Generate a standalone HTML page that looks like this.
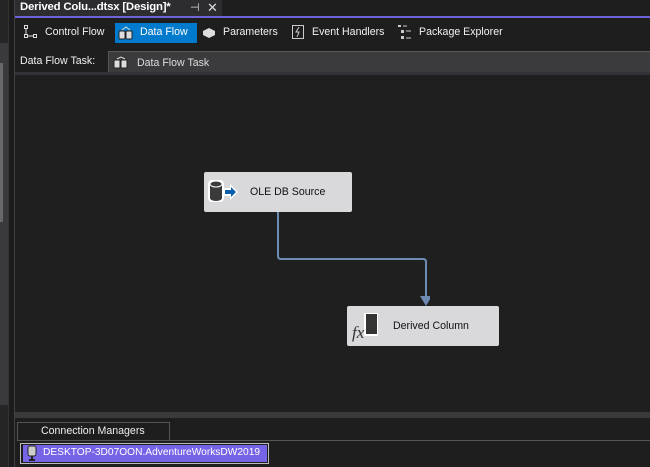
<!DOCTYPE html>
<html><head><style>
*{margin:0;padding:0;box-sizing:border-box}
body{width:650px;height:467px;background:#1e1e1e;font-family:"Liberation Sans",sans-serif;font-size:10.6px;color:#f1f1f1;position:relative;overflow:hidden}
.a{position:absolute;white-space:nowrap}
</style></head><body>
<div class="a" style="left:0;top:0;width:8px;height:467px;background:#252526"></div>
<div class="a" style="left:0;top:43px;width:8px;height:362px;background:#3a3a3d"></div>
<div class="a" style="left:0;top:63px;width:3px;height:159px;background:#686868"></div>
<div class="a" style="left:8px;top:0;width:6px;height:467px;background:#1c1c1c;border-left:1px solid #333"></div>
<div class="a" style="left:14px;top:0;width:1px;height:467px;background:#3f3f46"></div>
<div class="a" style="left:15px;top:0;width:635px;height:16px;background:#1e1e1e"></div>
<div class="a" style="left:15px;top:0;width:207px;height:16px;background:#2d2d30"></div>
<div class="a" style="left:20px;top:1px;font-weight:bold;font-size:11.4px;color:#fff;letter-spacing:-0.2px">Derived Colu...dtsx [Design]*</div>
<div class="a" style="left:190px;top:1px;font-size:11px;color:#ddd">⊣</div>
<div class="a" style="left:207px;top:0px;font-size:13px;color:#ddd">✕</div>
<div class="a" style="left:15px;top:16px;width:635px;height:2px;background:#6e63d8"></div>
<svg class="a" style="left:23px;top:25px" width="16" height="14"><rect x="1.5" y="0.5" width="3" height="3" fill="none" stroke="#ddd"/><rect x="1.5" y="9.5" width="3" height="3" fill="none" stroke="#ddd"/><rect x="10.5" y="9.5" width="3" height="3" fill="none" stroke="#ddd"/><path d="M3 4v5M5 11h5" stroke="#ddd"/></svg>
<div class="a" style="left:45px;top:26px">Control Flow</div>
<div class="a" style="left:115px;top:23px;width:82px;height:20px;background:#007acc"></div>
<svg class="a" style="left:118px;top:25px" width="16" height="15"><rect x="1" y="6" width="6" height="8" rx="1" fill="#ddd" stroke="#222"/><rect x="8" y="6" width="6" height="8" rx="1" fill="#ddd" stroke="#222"/><path d="M4 5l4-3 4 3" stroke="#ddd" fill="none"/></svg>
<div class="a" style="left:140px;top:26px;color:#fff">Data Flow</div>
<svg class="a" style="left:202px;top:27px" width="14" height="11"><path d="M1 4l6-3 6 3v4l-6 3-6-3z" fill="#ddd"/></svg>
<div class="a" style="left:223px;top:26px">Parameters</div>
<svg class="a" style="left:292px;top:25px" width="12" height="14"><rect x="0.5" y="0.5" width="11" height="13" fill="none" stroke="#ccc"/><path d="M7 2l-3 5h3l-2 5" stroke="#ccc" fill="none"/></svg>
<div class="a" style="left:312px;top:26px">Event Handlers</div>
<svg class="a" style="left:398px;top:25px" width="14" height="14"><rect x="0" y="0" width="3" height="2" fill="#ccc"/><rect x="3" y="5" width="3" height="3" fill="#ccc"/><rect x="3" y="11" width="3" height="3" fill="#ccc"/><path d="M5 1h4M8 6h5M8 13h5" stroke="#ccc"/></svg>
<div class="a" style="left:419px;top:26px">Package Explorer</div>
<div class="a" style="left:20px;top:55px">Data Flow Task:</div>
<div class="a" style="left:108px;top:51px;width:542px;height:21px;background:#3b3b3d;border-top:1px solid #5a5a5a;border-left:1px solid #555"></div>
<svg class="a" style="left:113px;top:56px" width="16" height="13"><rect x="1" y="4" width="6" height="8" rx="1" fill="#ddd" stroke="#222"/><rect x="8" y="4" width="6" height="8" rx="1" fill="#ddd" stroke="#222"/><path d="M4 3l4-2 4 2" stroke="#ddd" fill="none"/></svg>
<div class="a" style="left:137px;top:57px;color:#ddd">Data Flow Task</div>
<div class="a" style="left:15px;top:72px;width:635px;height:3px;background:#333337"></div>
<div class="a" style="left:15px;top:75px;width:635px;height:337px;background:#1f1f1f"></div>
<div class="a" style="left:204px;top:172px;width:148px;height:40px;background:#d9d9dc;border-radius:2px"></div>
<svg class="a" style="left:207px;top:178px" width="34" height="28"><rect x="1" y="2" width="16" height="22" rx="4" fill="#fff"/><path d="M3 6v14a6 3 0 0 0 12 0V6z" fill="#3a3a3a"/><ellipse cx="9" cy="6" rx="6" ry="3" fill="#3a3a3a" stroke="#fff"/><path d="M17 10h6v-4l8 8-8 8v-4h-6z" fill="#fff"/><path d="M18 12h6v-3l5 5-5 5v-3h-6z" fill="#0b5ea8"/></svg>
<div class="a" style="left:250px;top:186px;color:#111">OLE DB Source</div>
<svg class="a" style="left:270px;top:212px" width="160" height="95"><path d="M8 0v44q0 3 3 3h142q3 0 3 3v38" stroke="#6d8bb2" stroke-width="2" fill="none"/><path d="M150 84h12l-6 10z" fill="#6d8bb2"/></svg>
<div class="a" style="left:347px;top:306px;width:152px;height:40px;background:#d9d9dc;border-radius:2px"></div>
<svg class="a" style="left:351px;top:312px" width="30" height="30"><rect x="13" y="1" width="14" height="23" fill="#fff"/><rect x="15" y="2" width="11" height="20" fill="#333"/><text x="1" y="26" font-family="Liberation Serif" font-style="italic" font-size="17" fill="#333">fx</text></svg>
<div class="a" style="left:393px;top:320px;color:#111">Derived Column</div>
<div class="a" style="left:15px;top:412px;width:635px;height:6px;background:#3a3a3d"></div>
<div class="a" style="left:15px;top:418px;width:635px;height:49px;background:#1e1e1e"></div>
<div class="a" style="left:17px;top:422px;width:153px;height:19px;border:1px solid #555;border-bottom:none;background:#1e1e1e"></div>
<div class="a" style="left:41px;top:425px;color:#eee">Connection Managers</div>
<div class="a" style="left:17px;top:440px;width:633px;height:1px;background:#555"></div>
<div class="a" style="left:20px;top:443px;width:249px;height:21px;border:1px solid #bbb"></div>
<div class="a" style="left:23px;top:445px;width:244px;height:17px;background:#7565e6"></div>
<svg class="a" style="left:26px;top:445px" width="12" height="17"><rect x="2" y="1" width="8" height="10" rx="2" fill="#ccc" stroke="#222"/><path d="M6 11v4M3 15h6" stroke="#222" stroke-width="2"/></svg>
<div class="a" style="left:43px;top:447px;color:#fff;font-size:10.2px">DESKTOP-3D07OON.AdventureWorksDW2019</div>
</body></html>
